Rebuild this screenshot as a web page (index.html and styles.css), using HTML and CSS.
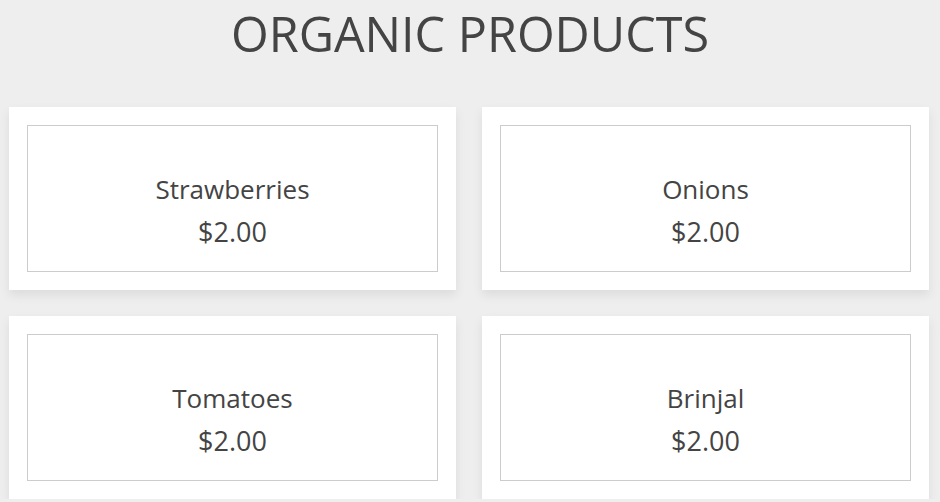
FILE: index.html
```html
<!DOCTYPE html>
<html lang="en">
<head>
<meta charset="utf-8">
<title>Organic Products</title>
<link rel="stylesheet" href="styles.css">
</head>
<body>
<h1 class="title">ORGANIC PRODUCTS</h1>
<div class="grid">
  <div class="card"><div class="card-inner"><div class="name">Strawberries</div><div class="price">$2.00</div></div></div>
  <div class="card"><div class="card-inner"><div class="name">Onions</div><div class="price">$2.00</div></div></div>
  <div class="card"><div class="card-inner"><div class="name">Tomatoes</div><div class="price">$2.00</div></div></div>
  <div class="card"><div class="card-inner"><div class="name">Brinjal</div><div class="price">$2.00</div></div></div>
</div>
</body>
</html>
```
FILE: styles.css
```css
html, body {
  margin: 0;
  padding: 0;
  background: #eeeeee;
  overflow: hidden;
}
body {
  font-family: "Open Sans", "Noto Sans", sans-serif;
  color: #444444;
}
.title {
  margin: 0 0 41px 0;
  font-size: 48.5px;
  line-height: 66px;
  font-weight: 400;
  text-align: center;
  color: #444444;
}
.grid {
  display: grid;
  grid-template-columns: 447px 447px;
  column-gap: 26px;
  row-gap: 26px;
  padding-left: 9px;
}
.card {
  background: #ffffff;
  padding: 18px;
  box-shadow: 0 5px 10px rgba(0, 0, 0, 0.08);
}
.card-inner {
  border: 1px solid #cccccc;
  padding: 43px 0 16px 0;
  box-sizing: border-box;
  height: 147px;
  text-align: center;
}
.name {
  font-size: 26px;
  line-height: 40px;
  font-weight: 500;
}
.price {
  font-size: 27px;
  line-height: 46px;
  font-weight: 400;
}
```
